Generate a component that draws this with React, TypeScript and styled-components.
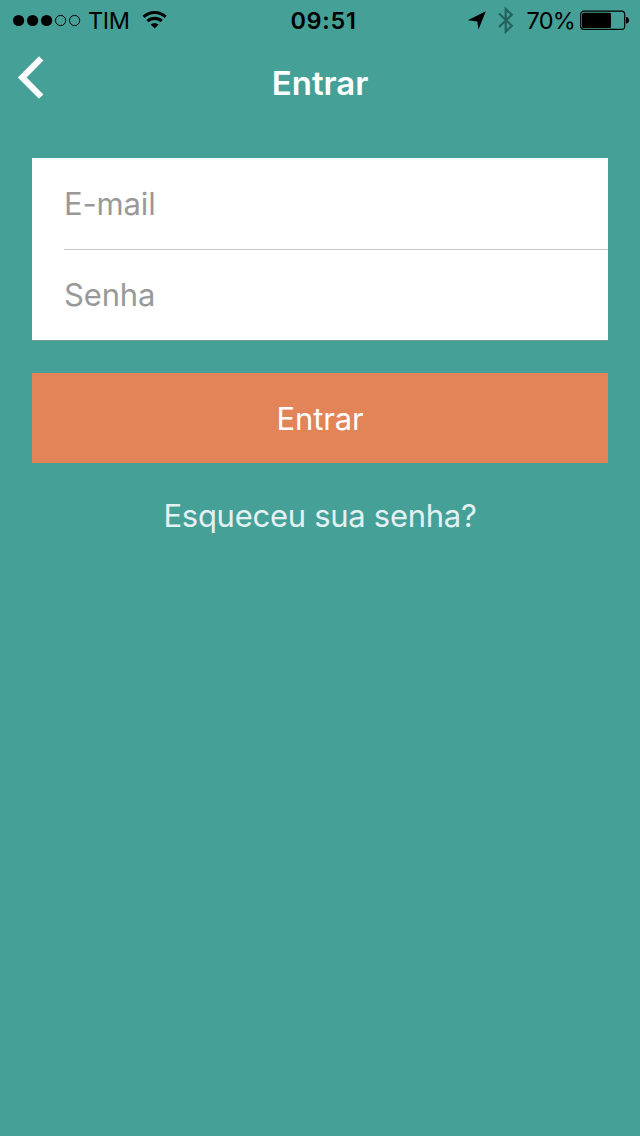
import React from 'react';
import styled, { createGlobalStyle } from 'styled-components';

const Global = createGlobalStyle`
  *, *::before, *::after { box-sizing: border-box; }
  html, body { margin: 0; background: #45a097; }
  body { font-family: Inter, "Liberation Sans", sans-serif; }
`;

const Screen = styled.main`
  display: flex;
  flex-direction: column;
  width: 640px;
  height: 1136px;
  overflow: hidden;
  background: #45a097;
`;

const StatusBar = styled.header`
  display: grid;
  grid-template-columns: 1fr auto 1fr;
  align-items: center;
  height: 40px;
  padding: 0 10px 0 13px;
  color: #000;
`;

const StatusGroup = styled.div<{ $end?: boolean }>`
  display: flex;
  align-items: center;
  justify-content: ${p => (p.$end ? 'flex-end' : 'flex-start')};
  height: 40px;
`;

const StatusText = styled.span<{ $weight?: number; $spacing?: number; $left?: number }>`
  padding-top: 2px;
  margin-left: ${p => p.$left ?? 0}px;
  font-size: 23.5px;
  line-height: 38px;
  font-weight: ${p => p.$weight ?? 400};
  letter-spacing: ${p => p.$spacing ?? 0}px;
  white-space: nowrap;
`;

const Icon = styled.svg<{ $left?: number }>`
  display: block;
  flex: none;
  margin-left: ${p => p.$left ?? 0}px;
`;

const NavBar = styled.nav`
  display: grid;
  grid-template-columns: 64px 1fr 64px;
  height: 88px;
`;

const BackButton = styled.button`
  display: flex;
  align-items: flex-start;
  padding: 16px 0 0 17px;
  border: 0;
  background: none;
`;

const Title = styled.h1`
  margin: 0;
  text-align: center;
  color: #fff;
  font-size: 33px;
  line-height: 86px;
  font-weight: 600;
  letter-spacing: -0.05px;
`;

const Form = styled.form`
  display: flex;
  flex-direction: column;
  padding: 30px 32px 0;
`;

const Fields = styled.div`
  height: 183px;
  padding-left: 32px;
  background: #fff;
  border-bottom: 1px solid #6d9d97;
`;

const Field = styled.label`
  display: block;
  height: 91px;
  color: #999;
  font-size: 31px;
  font-weight: 400;
  line-height: 92px;
  letter-spacing: -0.15px;

  & + & { border-top: 1px solid #c4c4c6; line-height: 90px; }
`;

const Submit = styled.button`
  height: 90px;
  margin-top: 32px;
  padding: 2px 0 0;
  border: 0;
  background: #e28358;
  color: #fff;
  font: 400 31px/88px Inter, "Liberation Sans", sans-serif;
  letter-spacing: -0.15px;
`;

const Forgot = styled.a`
  margin-top: 30px;
  text-align: center;
  color: #e3f1f3;
  font-size: 31px;
  font-weight: 400;
  line-height: 46px;
  letter-spacing: -0.28px;
`;

export default function App() {
  return (
    <>
      <Global />
      <Screen>
        <StatusBar>
          <StatusGroup>
            <Icon width="68" height="14" viewBox="0 0 68 14">
              {[0, 1, 2].map(i => <circle key={i} cx={5.6 + i * 14} cy="7.5" r="5.6" />)}
              {[3, 4].map(i => <circle key={i} cx={5.6 + i * 14} cy="7.5" r="5.1" fill="none" stroke="#000" />)}
            </Icon>
            <StatusText $left={7} $spacing={-0.4}>TIM</StatusText>
            <Icon $left={12} width="26" height="20" viewBox="0 0 26 20" fill="none" stroke="#000" strokeWidth="3.2">
              <path d="M1.6 6.8a16.2 16.2 0 0 1 22 0" />
              <path d="M5.5 11.1a10.4 10.4 0 0 1 14.2 0" />
              <path d="M8.6 14.6a6.2 6.2 0 0 1 8 0L12.6 18.6z" fill="#000" stroke="none" />
            </Icon>
          </StatusGroup>
          <StatusText $weight={600} $spacing={0.7} $left={4}>09:51</StatusText>
          <StatusGroup $end>
            <Icon width="20" height="22" viewBox="0 0 20 22">
              <path d="M18.8 2.2 11.5 20.6 10.3 12.6 0.8 11.3z" />
            </Icon>
            <Icon $left={10} width="18" height="28" viewBox="0 0 18 28" fill="none" stroke="#23625d" strokeWidth="2.2">
              <path d="m2 7.5 12.8 12.3-6.1 5.9V3l6.1 5.7L2 21" />
            </Icon>
            <StatusText $spacing={-0.8} $left={12}>70%</StatusText>
            <Icon $left={5} width="50" height="20" viewBox="0 0 50 20">
              <rect x="0.7" y="1.2" width="44" height="18.2" rx="3.2" fill="none" stroke="#000" strokeWidth="1.2" />
              <rect x="2" y="2.7" width="29" height="15.2" rx="1.5" />
              <path d="M46 6.9q3 .3 3 3.4t-3 3.4z" />
            </Icon>
          </StatusGroup>
        </StatusBar>
        <NavBar>
          <BackButton type="button" aria-label="Voltar">
            <Icon width="28" height="44" viewBox="0 0 28 44" fill="none" stroke="#fff" strokeWidth="6.2">
              <path d="M24.2 2.4 5.2 21.5 24.2 40.6" />
            </Icon>
          </BackButton>
          <Title>Entrar</Title>
        </NavBar>
        <Form>
          <Fields>
            <Field>E-mail</Field>
            <Field>Senha</Field>
          </Fields>
          <Submit type="button">Entrar</Submit>
          <Forgot>Esqueceu sua senha?</Forgot>
        </Form>
      </Screen>
    </>
  );
}
